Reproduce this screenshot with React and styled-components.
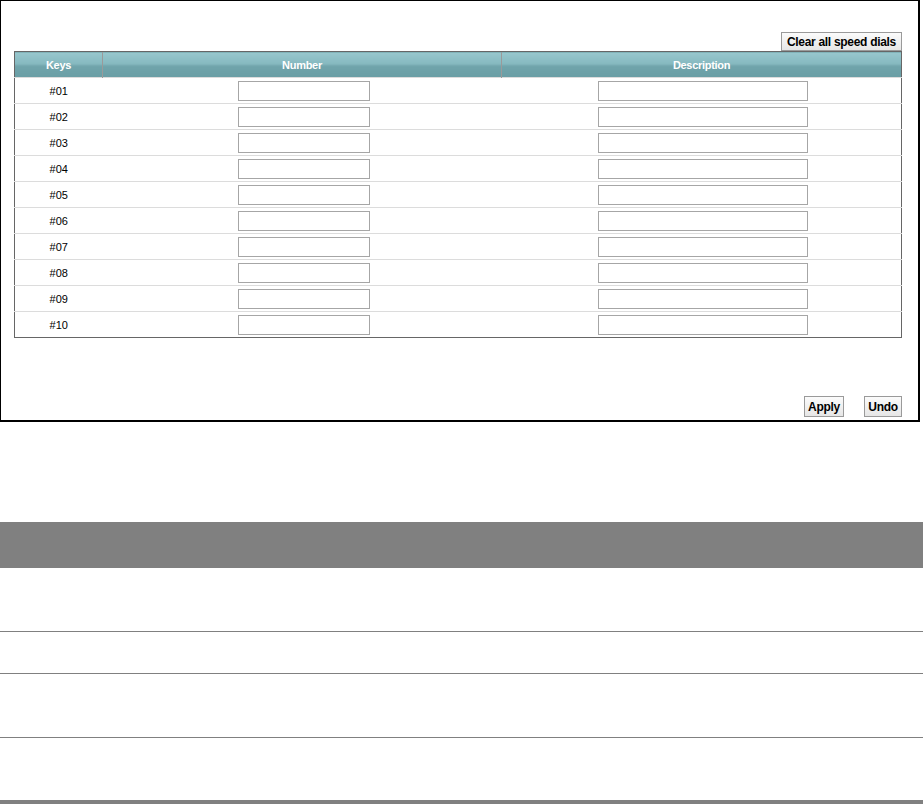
import React from "react";
import styled, { createGlobalStyle } from "styled-components";

const Global = createGlobalStyle`
  html, body { margin: 0; padding: 0; background: #fff; }
  body { font-family: "Liberation Sans", Arial, sans-serif; font-size: 11px; color: #000; }
`;

const Page = styled.div`
  width: 923px;
  display: flex;
  flex-direction: column;
`;

const Frame = styled.div`
  box-sizing: border-box;
  width: 920px;
  height: 422px;
  border-style: solid;
  border-color: #000;
  border-width: 1px 2px 2px 1px;
  padding: 31px 16px 3px 13px;
  display: flex;
  flex-direction: column;
`;

const Toolbar = styled.div`
  display: flex;
  justify-content: flex-end;
  gap: 20px;
`;

const Button = styled.button`
  box-sizing: border-box;
  height: ${(p) => p.$h || 19}px;
  width: ${(p) => (p.$w ? `${p.$w}px` : "auto")};
  padding: ${(p) => (p.$w ? "0" : "0 5px")};
  border: 1px solid #9a9a9a;
  background: linear-gradient(#fbfbfb, #e6e6e6);
  font-family: "Liberation Sans", Arial, sans-serif;
  font-weight: bold;
  font-size: 12px;
  letter-spacing: -0.3px;
  white-space: nowrap;
  text-align: center;
  color: #000;
  cursor: pointer;
  line-height: 1;
`;

const Table = styled.table`
  box-sizing: border-box;
  width: 888px;
  border-collapse: collapse;
  table-layout: fixed;
  border: 1px solid #666;
`;

const HeadCell = styled.th`
  height: 25px;
  padding: 0;
  width: ${(p) => (p.$w ? `${p.$w}px` : "auto")};
  background: linear-gradient(to bottom, #98c7cd 0%, #86b9c0 45%, #70a4ab 55%, #6a9ea5 100%);
  color: #fff;
  font-weight: bold;
  font-size: 11px;
  letter-spacing: -0.3px;
  text-align: center;
  border-left: 1px solid #9a9a9a;
  border-top: 1px solid #666;
  &:first-child { border-left: none; }
`;

const Row = styled.tr`
  border-top: 1px solid #dcdcdc;
`;

const Cell = styled.td`
  height: 25px;
  padding: 0;
  text-align: center;
  vertical-align: middle;
  font-size: 11px;
`;

const Input = styled.input`
  box-sizing: border-box;
  display: inline-block;
  vertical-align: middle;
  width: ${(p) => p.$w}px;
  height: 20px;
  margin: 0 0 0 ${(p) => p.$shift || 0}px;
  border: 1px solid #a6a6a6;
  background: #fff;
  padding: 0 3px;
  font-family: "Liberation Sans", Arial, sans-serif;
  font-size: 11px;
  outline: none;
`;

const Spacer = styled.div`
  flex: 1;
`;

const Gap = styled.div`
  height: 100px;
`;

const GreyHead = styled.div`
  height: 46px;
  background: #808080;
`;

const InfoRow = styled.div`
  height: ${(p) => p.$h}px;
  border-bottom: ${(p) => (p.$last ? "none" : "1px solid #808080")};
`;

const BottomBar = styled.div`
  height: 4px;
  background: #808080;
`;

const keys = ["#01", "#02", "#03", "#04", "#05", "#06", "#07", "#08", "#09", "#10"];

export default function App() {
  return (
    <Page>
      <Global />
      <Frame>
        <Toolbar>
          <Button $h={19}>Clear all speed dials</Button>
        </Toolbar>
        <Table>
          <thead>
            <tr>
              <HeadCell $w={87}>Keys</HeadCell>
              <HeadCell $w={398}>Number</HeadCell>
              <HeadCell>Description</HeadCell>
            </tr>
          </thead>
          <tbody>
            {keys.map((k) => (
              <Row key={k}>
                <Cell>{k}</Cell>
                <Cell>
                  <Input $w={132} $shift={4} type="text" />
                </Cell>
                <Cell>
                  <Input $w={210} $shift={4} type="text" />
                </Cell>
              </Row>
            ))}
          </tbody>
        </Table>
        <Spacer />
        <Toolbar>
          <Button $h={21} $w={40}>Apply</Button>
          <Button $h={21} $w={38}>Undo</Button>
        </Toolbar>
      </Frame>
      <Gap />
      <GreyHead />
      <InfoRow $h={63} />
      <InfoRow $h={41} />
      <InfoRow $h={63} />
      <InfoRow $h={62} $last />
      <BottomBar />
    </Page>
  );
}
